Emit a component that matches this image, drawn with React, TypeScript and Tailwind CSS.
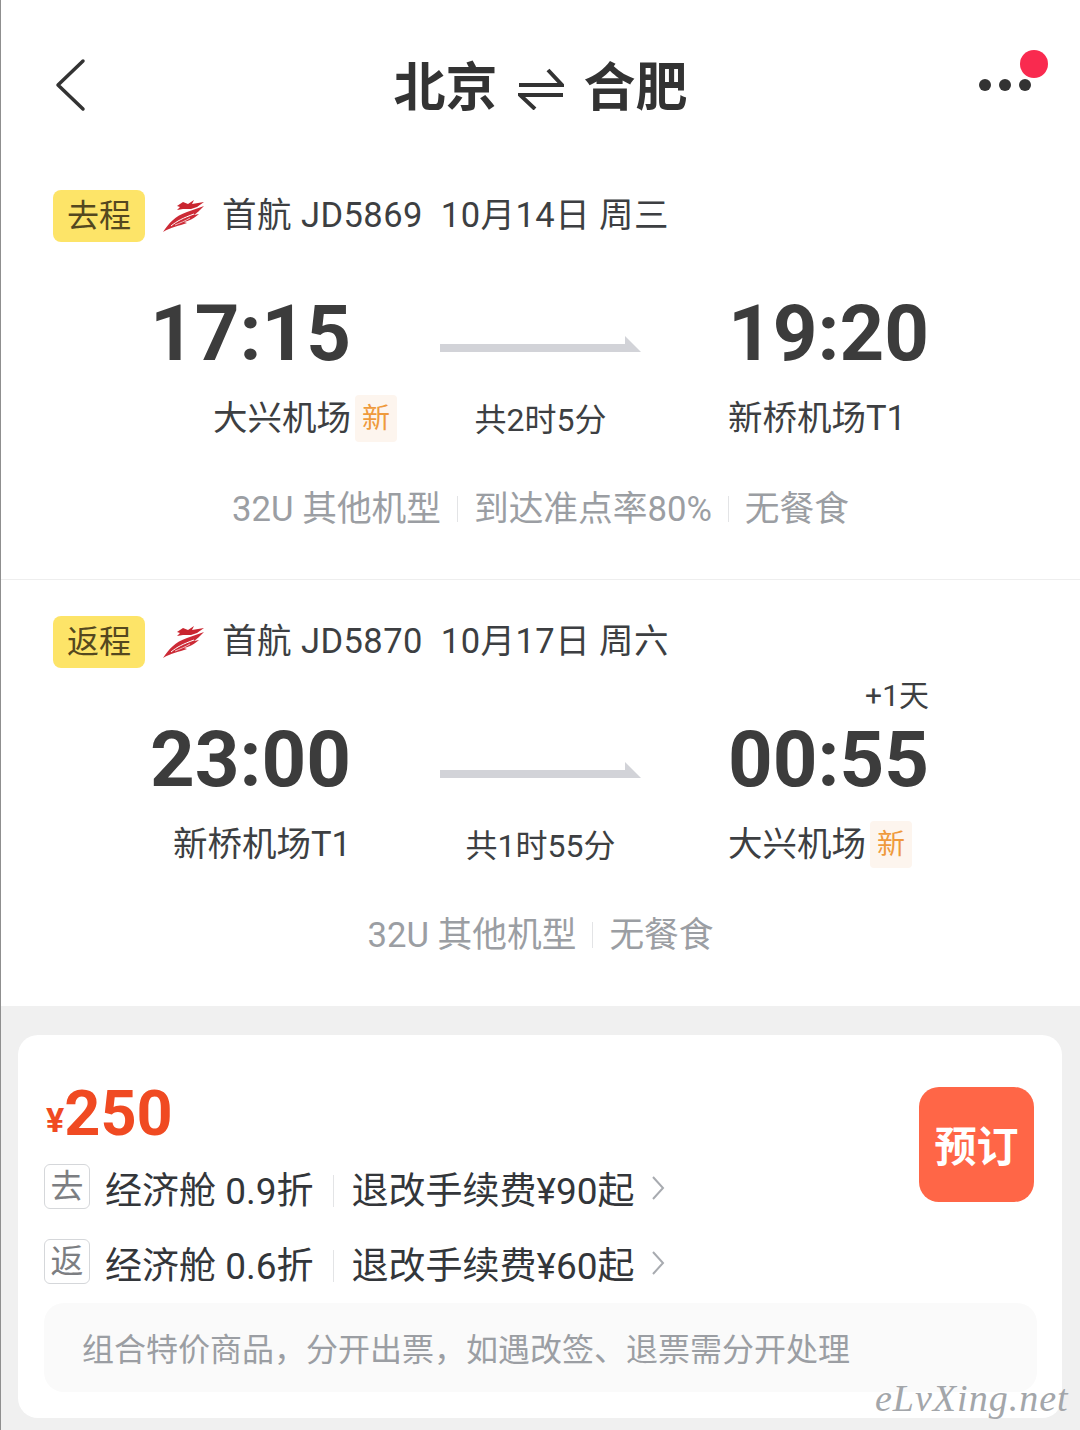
const tagClass = "flex h-[52px] w-[92px] shrink-0 items-center justify-center rounded-lg bg-[#fde468] text-[32px] text-[#54481f]";

function Logo() {
  return (
    <svg width="42" height="34" viewBox="0 0 42 34" className="shrink-0">
      <path d="M14 7 L20 3 L25 5 L31 1 L29 5 L41 3 L34 8 L28 10 L20 10 L14 11 L17 8 Z" fill="#c9252f" />
      <path d="M0 33 C6 24 12 17 24 13 L41 7 C36 12 34 14 31 16 L36 15 C30 20 26 22 21 23 L24 24 C16 27 8 28 0 33 Z" fill="#cc2a36" />
      <path d="M8 27 C14 22 20 19 31 15" stroke="#ffffff" strokeWidth="1" fill="none" />
      <path d="M12 26 C17 24 22 22 27 19" stroke="#f3b6ba" strokeWidth="1" fill="none" />
    </svg>
  );
}

function FlightArrow() {
  return (
    <svg width="202" height="18" viewBox="0 0 202 18">
      <path d="M0 8 H185 V0 L201 16 H0 Z" fill="#d2d3d8" />
    </svg>
  );
}

function NewTag() {
  return (
    <span className="ml-[4px] -mr-[46px] flex h-[47px] w-[42px] items-center justify-center rounded bg-[#fdf5ee] text-[28px] text-[#ef9a3c]">
      新
    </span>
  );
}

function Separator() {
  return <span className="mx-4 h-[26px] w-px bg-[#e3e4e6]" />;
}

type Flight = {
  tag: string;
  info: string;
  dep: string;
  arr: string;
  depPort: string;
  arrPort: string;
  depNew?: boolean;
  arrNew?: boolean;
  duration: string;
  details: string[];
  nextDay?: boolean;
};

const flights: Flight[] = [
  {
    tag: "去程",
    info: "首航 JD5869  10月14日 周三",
    dep: "17:15",
    arr: "19:20",
    depPort: "大兴机场",
    arrPort: "新桥机场T1",
    depNew: true,
    duration: "共2时5分",
    details: ["32U 其他机型", "到达准点率80%", "无餐食"],
  },
  {
    tag: "返程",
    info: "首航 JD5870  10月17日 周六",
    dep: "23:00",
    arr: "00:55",
    depPort: "新桥机场T1",
    arrPort: "大兴机场",
    arrNew: true,
    duration: "共1时55分",
    details: ["32U 其他机型", "无餐食"],
    nextDay: true,
  },
];

function FlightSection({ f, border }: { f: Flight; border: boolean }) {
  return (
    <section className={`h-[426px] pt-[36px] ${border ? "border-b border-[#eeeeee]" : ""}`}>
      <div className="flex h-[52px] items-center pl-[52px]">
        <div className={tagClass}>{f.tag}</div>
        <div className="ml-[18px]">
          <Logo />
        </div>
        <div className="ml-[17px] whitespace-pre text-[34.5px] tracking-[0.45px] text-[#3d3f42]">{f.info}</div>
      </div>
      <div className="mt-[54px] grid h-[76px] grid-cols-[350px_377px_1fr] items-center">
        <div className="text-right text-[78px] leading-[76px] font-bold text-[#3c3c3c]">{f.dep}</div>
        <div className="flex justify-center pl-[2px] pt-[22px]">
          <FlightArrow />
        </div>
        <div className="relative w-[203px] text-[78px] leading-[76px] font-bold text-[#3c3c3c]">
          {f.arr}
          {f.nextDay && (
            <span className="absolute -top-[44px] right-[2px] text-[30px] leading-[36px] font-normal text-[#3d3f42]">+1天</span>
          )}
        </div>
      </div>
      <div className="mt-[20px] grid h-[52px] grid-cols-[350px_377px_1fr] items-center text-[34.5px] text-[#3d3f42]">
        <div className="flex items-center justify-end pt-[1px]">
          {f.depPort}
          {f.depNew && <NewTag />}
        </div>
        <div className="pl-[2px] pt-[4px] text-center text-[32px]">{f.duration}</div>
        <div className="flex items-center pt-[1px]">
          {f.arrPort}
          {f.arrNew && <NewTag />}
        </div>
      </div>
      <div className="mt-[45px] flex h-[40px] items-center justify-center text-[34.7px] text-[#9b9ea3]">
        {f.details.map((d, i) => (
          <div key={d} className="flex items-center">
            {i > 0 && <Separator />}
            {d}
          </div>
        ))}
      </div>
    </section>
  );
}

function FareRow({ tag, text, fee }: { tag: string; text: string; fee: string }) {
  return (
    <div className="flex h-[45px] items-center">
      <span className="flex h-[45px] w-[46px] items-center justify-center rounded-md border border-[#d5d7da] text-[33px] text-[#7c7e82]">
        {tag}
      </span>
      <span className="ml-[15px] pt-[10px] text-[37px] text-[#33363a]">{text}</span>
      <span className="ml-[19px] mr-[18px] mt-[8px] h-[32px] w-px bg-[#e3e4e6]" />
      <span className="pt-[10px] text-[37px] text-[#33363a]">{fee}</span>
      <svg width="14" height="26" viewBox="0 0 14 26" fill="none" className="ml-[16px] mt-[3px]">
        <path d="M2 2 L12 13 L2 24" stroke="#a8abb0" strokeWidth="2" />
      </svg>
    </div>
  );
}

export default function App() {
  return (
    <div className="relative h-[1430px] w-[1080px] overflow-hidden border-l border-[#8f8f8f] bg-white font-[Roboto,'Noto_Sans_CJK_SC',sans-serif]">
      <header className="relative flex h-[154px] items-center justify-center">
        <svg width="34" height="54" viewBox="0 0 34 54" fill="none" className="absolute left-[52px] top-[58px]">
          <path d="M30 3 L5 27 L30 51" stroke="#333333" strokeWidth="3.5" strokeLinecap="round" strokeLinejoin="round" />
        </svg>
        <div className="mt-[23px] flex items-center text-[52px] font-bold text-[#333333]">
          <span>北京</span>
          <svg width="46" height="42" viewBox="0 0 46 42" fill="none" className="mx-[20px]">
            <path d="M1 17 H44 L30 2" stroke="#333333" strokeWidth="4" />
            <path d="M45 27 H2 L17 41" stroke="#333333" strokeWidth="4" />
          </svg>
          <span>合肥</span>
        </div>
        <div className="absolute left-[978px] top-[79px] flex gap-[8px]">
          <span className="h-[12px] w-[12px] rounded-full bg-[#333333]" />
          <span className="h-[12px] w-[12px] rounded-full bg-[#333333]" />
          <span className="h-[12px] w-[12px] rounded-full bg-[#333333]" />
        </div>
        <span className="absolute left-[1019px] top-[50px] h-[28px] w-[28px] rounded-full bg-[#f92a4f]" />
      </header>

      {flights.map((f, i) => (
        <FlightSection key={f.tag} f={f} border={i === 0} />
      ))}

      <div className="h-[424px] bg-[#f0f0f0] pl-[17px] pr-[18px] pt-[29px]">
        <div className="relative h-[383px] rounded-[20px] bg-white pl-[26px] pr-[25px] pt-[49px]">
          <div className="flex items-start justify-between">
            <div>
              <div className="flex h-[60px] items-end pl-[2px] text-[#f04a22]">
                <span className="mb-[5px] text-[34px] leading-[38px] font-bold">¥</span>
                <span className="pt-[1px] text-[63px] leading-[60px] font-bold">250</span>
              </div>
              <div className="mt-[20px] flex flex-col gap-[30px]">
                <FareRow tag="去" text="经济舱 0.9折" fee="退改手续费¥90起" />
                <FareRow tag="返" text="经济舱 0.6折" fee="退改手续费¥60起" />
              </div>
            </div>
            <button className="mr-[3px] mt-[3px] flex h-[115px] w-[115px] items-center justify-center rounded-[20px] bg-[#ff6647] pt-[6px] text-[42px] font-bold text-white">
              预订
            </button>
          </div>
          <div className="mt-[19px] flex h-[89px] items-center rounded-[20px] bg-[#fafafa] pl-[38px] pt-[4px] text-[32px] text-[#9b9ea3]">
            组合特价商品，分开出票，如遇改签、退票需分开处理
          </div>
        </div>
      </div>

      <div className="absolute left-[874px] top-[1376px] font-['Liberation_Serif',serif] text-[38px] leading-[44px] tracking-[1px] text-[#a3a6aa] italic">
        eLvXing.net
      </div>
    </div>
  );
}
